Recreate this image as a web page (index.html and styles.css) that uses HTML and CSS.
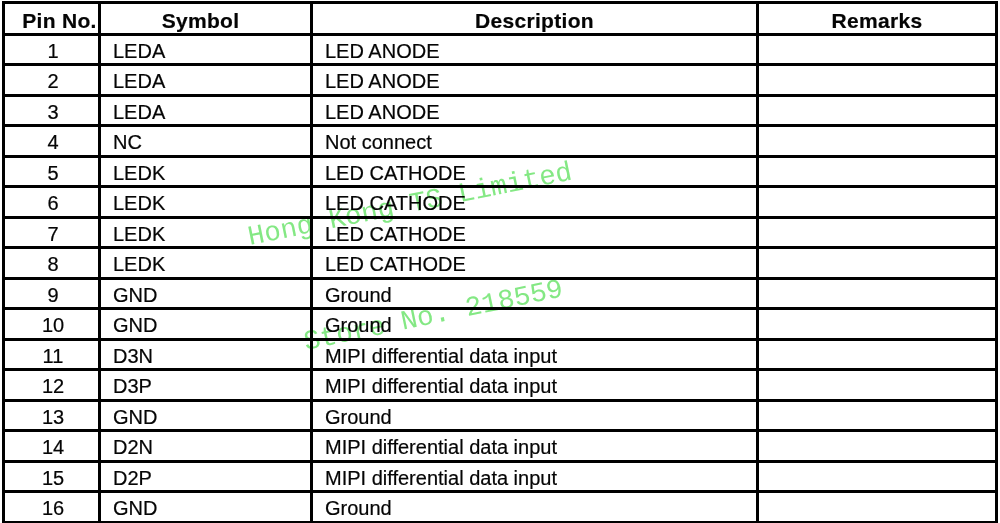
FILE: index.html
```html
<!DOCTYPE html>
<html>
<head>
<meta charset="utf-8">
<link rel="stylesheet" href="styles.css">
</head>
<body>
<div class="page">
  <div class="pins">
    <div class="cell head head-pin">Pin No.</div>
    <div class="cell head head-sym">Symbol</div>
    <div class="cell head">Description</div>
    <div class="cell head">Remarks</div>

    <div class="cell num">1</div><div class="cell txt">LEDA</div><div class="cell txt">LED ANODE</div><div class="cell"></div>
    <div class="cell num">2</div><div class="cell txt">LEDA</div><div class="cell txt">LED ANODE</div><div class="cell"></div>
    <div class="cell num">3</div><div class="cell txt">LEDA</div><div class="cell txt">LED ANODE</div><div class="cell"></div>
    <div class="cell num">4</div><div class="cell txt">NC</div><div class="cell txt">Not connect</div><div class="cell"></div>
    <div class="cell num">5</div><div class="cell txt">LEDK</div><div class="cell txt">LED CATHODE</div><div class="cell"></div>
    <div class="cell num">6</div><div class="cell txt">LEDK</div><div class="cell txt">LED CATHODE</div><div class="cell"></div>
    <div class="cell num">7</div><div class="cell txt">LEDK</div><div class="cell txt">LED CATHODE</div><div class="cell"></div>
    <div class="cell num">8</div><div class="cell txt">LEDK</div><div class="cell txt">LED CATHODE</div><div class="cell"></div>
    <div class="cell num">9</div><div class="cell txt">GND</div><div class="cell txt">Ground</div><div class="cell"></div>
    <div class="cell num">10</div><div class="cell txt">GND</div><div class="cell txt">Ground</div><div class="cell"></div>
    <div class="cell num">11</div><div class="cell txt">D3N</div><div class="cell txt">MIPI differential data input</div><div class="cell"></div>
    <div class="cell num">12</div><div class="cell txt">D3P</div><div class="cell txt">MIPI differential data input</div><div class="cell"></div>
    <div class="cell num">13</div><div class="cell txt">GND</div><div class="cell txt">Ground</div><div class="cell"></div>
    <div class="cell num">14</div><div class="cell txt">D2N</div><div class="cell txt">MIPI differential data input</div><div class="cell"></div>
    <div class="cell num">15</div><div class="cell txt">D2P</div><div class="cell txt">MIPI differential data input</div><div class="cell"></div>
    <div class="cell num">16</div><div class="cell txt">GND</div><div class="cell txt">Ground</div><div class="cell"></div>
  </div>
  <div class="mark mark-company">Hong Kong TS Limited</div>
  <div class="mark mark-store">Store No. 218559</div>
</div>
</body>
</html>
```

FILE: styles.css
```css
html, body {
  margin: 0;
  padding: 0;
  background: #ffffff;
}

.page {
  position: relative;
  width: 1000px;
  height: 523px;
  overflow: hidden;
}

.pins {
  display: grid;
  grid-template-columns: 93px 209px 443px 236px;
  grid-template-rows: 29px repeat(8, 27px 28px);
  gap: 3px;
  padding: 3px;
  margin: 1px 0 0 2px;
  width: max-content;
  background: #000000;
  font-family: "Liberation Sans", Arial, sans-serif;
  font-size: 20px;
  color: #050505;
}

.cell {
  background: #ffffff;
  display: flex;
  align-items: center;
  line-height: 1;
  padding-top: 2px;
  box-sizing: border-box;
  white-space: nowrap;
  -webkit-text-stroke: 0.2px #050505;
}

.head {
  justify-content: center;
  font-weight: bold;
  font-size: 21px;
  letter-spacing: 0.3px;
  padding-top: 3px;
}

.head-pin {
  padding-left: 16px;
}

.head-sym {
  padding-right: 10px;
}

.num {
  justify-content: center;
  padding-left: 3px;
}

.txt {
  padding-left: 12px;
}

.mark {
  position: absolute;
  font-family: "Liberation Mono", "Courier New", monospace;
  font-size: 27.5px;
  line-height: 1;
  color: #84e884;
  mix-blend-mode: multiply;
  transform-origin: 0 80%;
  white-space: nowrap;
}

.mark-company {
  left: 250px;
  top: 224px;
  transform: rotate(-11.5deg);
}

.mark-store {
  left: 306px;
  top: 329px;
  transform: rotate(-11.8deg);
}
```
